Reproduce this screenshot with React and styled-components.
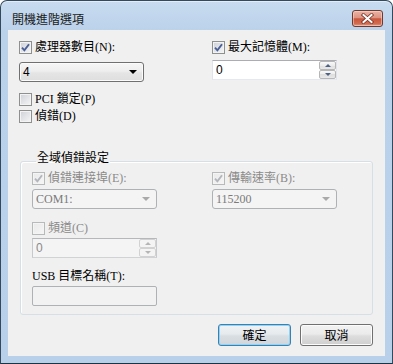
import React from 'react';
import styled, { createGlobalStyle } from 'styled-components';

const Global = createGlobalStyle`
  html, body { margin: 0; padding: 0; background: #ffffff; }
  body {
    font-family: "Liberation Serif", "Noto Sans CJK TC", serif;
    font-size: 12px;
    color: #000;
  }
`;

const Window = styled.div`
  width: 393px;
  height: 364px;
  box-sizing: border-box;
  border: 1px solid #34495c;
  border-bottom-color: #1d3340;
  border-radius: 7px 7px 0 0;
  background: linear-gradient(#c8dbef, #bbd2eb 30px, #b8d0ea);
  display: flex;
  flex-direction: column;
  padding: 0 7px 7px 7px;
  box-shadow: inset 0 1px 0 #e3edf8;
`;

const TitleBar = styled.div`
  height: 29px;
  flex: none;
  display: flex;
  align-items: flex-end;
  padding: 0 2px 3px 4px;
  box-sizing: border-box;
`;

const Title = styled.span`
  font-family: "Noto Sans CJK TC", sans-serif;
  font-size: 12px;
  line-height: 16px;
  color: #1b1b1b;
`;

const CloseButton = styled.div`
  margin-left: auto;
  width: 31px;
  height: 17px;
  box-sizing: border-box;
  border: 1px solid #6e3a30;
  border-radius: 3px;
  background: linear-gradient(#eab3a5, #dd9482 45%, #c9563c 52%, #d26d52 85%, #e3a08a);
  box-shadow: inset 0 0 0 1px rgba(255, 225, 215, 0.5);
  display: flex;
  align-items: center;
  justify-content: center;
`;

const Client = styled.div`
  flex: 1;
  background: #f0f0f0;
  padding: 10px 12px 0 11px;
  display: flex;
  flex-direction: column;
  box-sizing: border-box;
`;

const TopGrid = styled.div`
  display: grid;
  grid-template-columns: 193px 1fr;
`;

const Col = styled.div`
  display: flex;
  flex-direction: column;
  align-items: flex-start;
`;

const CheckRow = styled.label`
  display: flex;
  align-items: center;
  gap: 3px;
  height: 14px;
  margin-top: ${p => p.$mt || 0}px;
  color: ${p => (p.$disabled ? '#8a8a8a' : '#000')};
  white-space: nowrap;
`;

const Box = styled.span`
  width: 13px;
  height: 13px;
  flex: none;
  box-sizing: border-box;
  border: 1px solid ${p => (p.$disabled ? '#b7b9bb' : '#8e8f8f')};
  background: ${p =>
    p.$disabled
      ? 'linear-gradient(135deg, #e9e9e9, #f6f6f6)'
      : 'linear-gradient(135deg, #cdd1d7, #f6f6f6)'};
  box-shadow: inset 0 0 0 1px ${p => (p.$disabled ? '#f4f4f4' : '#f3f3f3')};
  display: flex;
  align-items: center;
  justify-content: center;
`;

const Text = styled.span`
  line-height: 14px;
`;

const Combo = styled.div`
  width: ${p => p.$w || 125}px;
  height: 20px;
  margin-top: ${p => p.$mt || 0}px;
  box-sizing: border-box;
  border: 1px solid ${p => (p.$disabled ? '#adb2b5' : '#707070')};
  border-radius: 3px;
  background: ${p =>
    p.$disabled
      ? '#f4f4f4'
      : 'linear-gradient(#f6f6f6, #eeeeee 45%, #e5e5e5 55%, #dedede)'};
  box-shadow: inset 0 0 0 1px ${p => (p.$disabled ? '#f4f4f4' : '#fbfbfb')};
  display: flex;
  align-items: center;
  padding: 0 6px 0 3px;
  color: ${p => (p.$disabled ? '#7a7a7a' : '#000')};
`;

const ComboText = styled.span`
  flex: 1;
  line-height: 14px;
  font-family: ${p => (p.$sans ? '"Liberation Sans", sans-serif' : 'inherit')};
`;

const Arrow = styled.span`
  width: 0;
  height: 0;
  border-left: 4px solid transparent;
  border-right: 4px solid transparent;
  border-top: 4px solid ${p => (p.$disabled ? '#a9a9a9' : '#000')};
`;

const SpinBox = styled.div`
  width: 125px;
  height: 20px;
  margin-top: ${p => p.$mt || 0}px;
  box-sizing: border-box;
  display: flex;
  border: 1px solid ${p => (p.$disabled ? '#c7c9cc' : '#e2e3ea')};
  border-top-color: ${p => (p.$disabled ? '#b5b7ba' : '#abadb3')};
  border-bottom-color: ${p => (p.$disabled ? '#d0d2d4' : '#e3e9ef')};
  background: ${p => (p.$disabled ? '#f4f4f4' : '#ffffff')};
`;

const Field = styled.span`
  flex: 1;
  padding-left: 3px;
  line-height: 18px;
  font-family: "Liberation Sans", sans-serif;
  color: ${p => (p.$disabled ? '#8a8a8a' : '#000')};
`;

const SpinCol = styled.div`
  width: 17px;
  display: flex;
  flex-direction: column;
`;

const SpinBtn = styled.div`
  flex: 1;
  box-sizing: border-box;
  border: 1px solid ${p => (p.$disabled ? '#d2d2d2' : '#b6b6b6')};
  border-radius: 2px;
  background: ${p =>
    p.$disabled ? '#f4f4f4' : 'linear-gradient(#f8f8f8, #ececec 50%, #dedede 50%, #e8e8e8)'};
  display: flex;
  align-items: center;
  justify-content: center;
`;

const TinyArrow = styled.span`
  width: 0;
  height: 0;
  border-left: 3px solid transparent;
  border-right: 3px solid transparent;
  ${p =>
    p.$up
      ? `border-bottom: 3px solid ${p.$disabled ? '#b5b5b5' : '#4d6185'};`
      : `border-top: 3px solid ${p.$disabled ? '#b5b5b5' : '#4d6185'};`}
`;

const Group = styled.fieldset`
  margin: 0 0 0 1px;
  padding: 0 0 8px 11px;
  border: 1px solid #d5dfe5;
  border-radius: 3px;
  min-width: 0;
  margin-top: 28px;
  box-shadow: 1px 1px 0 #ffffff inset;
`;

const Legend = styled.legend`
  margin-left: 4px;
  padding: 0 1px 6px 1px;
  line-height: 14px;
  font-size: 12px;
`;

const GroupGrid = styled.div`
  display: grid;
  grid-template-columns: 180px 1fr;
`;

const Label = styled.div`
  margin-top: ${p => p.$mt || 0}px;
  line-height: 14px;
  white-space: nowrap;
`;

const TextBox = styled.div`
  width: 125px;
  height: 20px;
  margin-top: ${p => p.$mt || 0}px;
  box-sizing: border-box;
  border: 1px solid #adb2b5;
  border-radius: 2px;
  background: #f2f2f2;
`;

const ButtonRow = styled.div`
  display: flex;
  justify-content: flex-end;
  gap: 9px;
  margin-top: 9px;
`;

const Button = styled.div`
  width: 73px;
  height: 22px;
  box-sizing: border-box;
  border: 1px solid ${p => (p.$default ? '#3c7fb1' : '#707070')};
  border-radius: 3px;
  background: ${p =>
    p.$default
      ? 'linear-gradient(#f0f3f5, #e6eaed 45%, #d9dee2 55%, #cfd6db)'
      : 'linear-gradient(#f2f2f2, #ebebeb 45%, #dddddd 55%, #cfcfcf)'};
  box-shadow: inset 0 0 0 1px ${p => (p.$default ? '#8fd3f5' : '#fcfcfc')};
  display: flex;
  align-items: center;
  justify-content: center;
  font-family: "Noto Sans CJK TC", sans-serif;
  font-size: 12px;
  line-height: 14px;
`;

const Check = ({ checked, disabled }) => (
  <Box $disabled={disabled}>
    {checked && (
      <svg width="9" height="9" viewBox="0 0 9 9">
        <path
          d="M1 4.6 L3.4 7.3 L8 1.2"
          fill="none"
          stroke={disabled ? '#b2b6ba' : '#4a5f97'}
          strokeWidth="1.9"
          strokeLinejoin="miter"
        />
      </svg>
    )}
  </Box>
);

const CheckItem = ({ checked, disabled, mt, children }) => (
  <CheckRow $disabled={disabled} $mt={mt}>
    <Check checked={checked} disabled={disabled} />
    <Text>{children}</Text>
  </CheckRow>
);

const Spinner = ({ value, disabled, mt }) => (
  <SpinBox $disabled={disabled} $mt={mt}>
    <Field $disabled={disabled}>{value}</Field>
    <SpinCol>
      <SpinBtn $disabled={disabled}>
        <TinyArrow $up $disabled={disabled} />
      </SpinBtn>
      <SpinBtn $disabled={disabled}>
        <TinyArrow $disabled={disabled} />
      </SpinBtn>
    </SpinCol>
  </SpinBox>
);

export default function App() {
  return (
    <>
      <Global />
      <Window>
        <TitleBar>
          <Title>開機進階選項</Title>
          <CloseButton>
            <svg width="13" height="11" viewBox="0 0 13 11">
              <path
                d="M2.5 2 L10.5 9 M10.5 2 L2.5 9"
                stroke="#7a3327"
                strokeWidth="3.6"
                strokeLinecap="square"
              />
              <path
                d="M2.5 2 L10.5 9 M10.5 2 L2.5 9"
                stroke="#ffffff"
                strokeWidth="2"
                strokeLinecap="square"
              />
            </svg>
          </CloseButton>
        </TitleBar>
        <Client>
          <TopGrid>
            <Col>
              <CheckItem checked>處理器數目(N):</CheckItem>
              <Combo $mt={8}>
                <ComboText $sans>4</ComboText>
                <Arrow />
              </Combo>
              <CheckItem mt={10}>PCI 鎖定(P)</CheckItem>
              <CheckItem mt={3}>偵錯(D)</CheckItem>
            </Col>
            <Col>
              <CheckItem checked>最大記憶體(M):</CheckItem>
              <Spinner value="0" mt={6} />
            </Col>
          </TopGrid>
          <Group>
            <Legend>全域偵錯設定</Legend>
            <GroupGrid>
              <Col>
                <CheckItem checked disabled>偵錯連接埠(E):</CheckItem>
                <Combo $mt={4} $disabled>
                  <ComboText>COM1:</ComboText>
                  <Arrow $disabled />
                </Combo>
                <CheckItem disabled mt={12}>頻道(C)</CheckItem>
                <Spinner value="0" disabled mt={3} />
                <Label $mt={11}>USB 目標名稱(T):</Label>
                <TextBox $mt={3} />
              </Col>
              <Col>
                <CheckItem checked disabled>傳輸速率(B):</CheckItem>
                <Combo $mt={4} $disabled>
                  <ComboText>115200</ComboText>
                  <Arrow $disabled />
                </Combo>
              </Col>
            </GroupGrid>
          </Group>
          <ButtonRow>
            <Button $default>確定</Button>
            <Button>取消</Button>
          </ButtonRow>
        </Client>
      </Window>
    </>
  );
}
